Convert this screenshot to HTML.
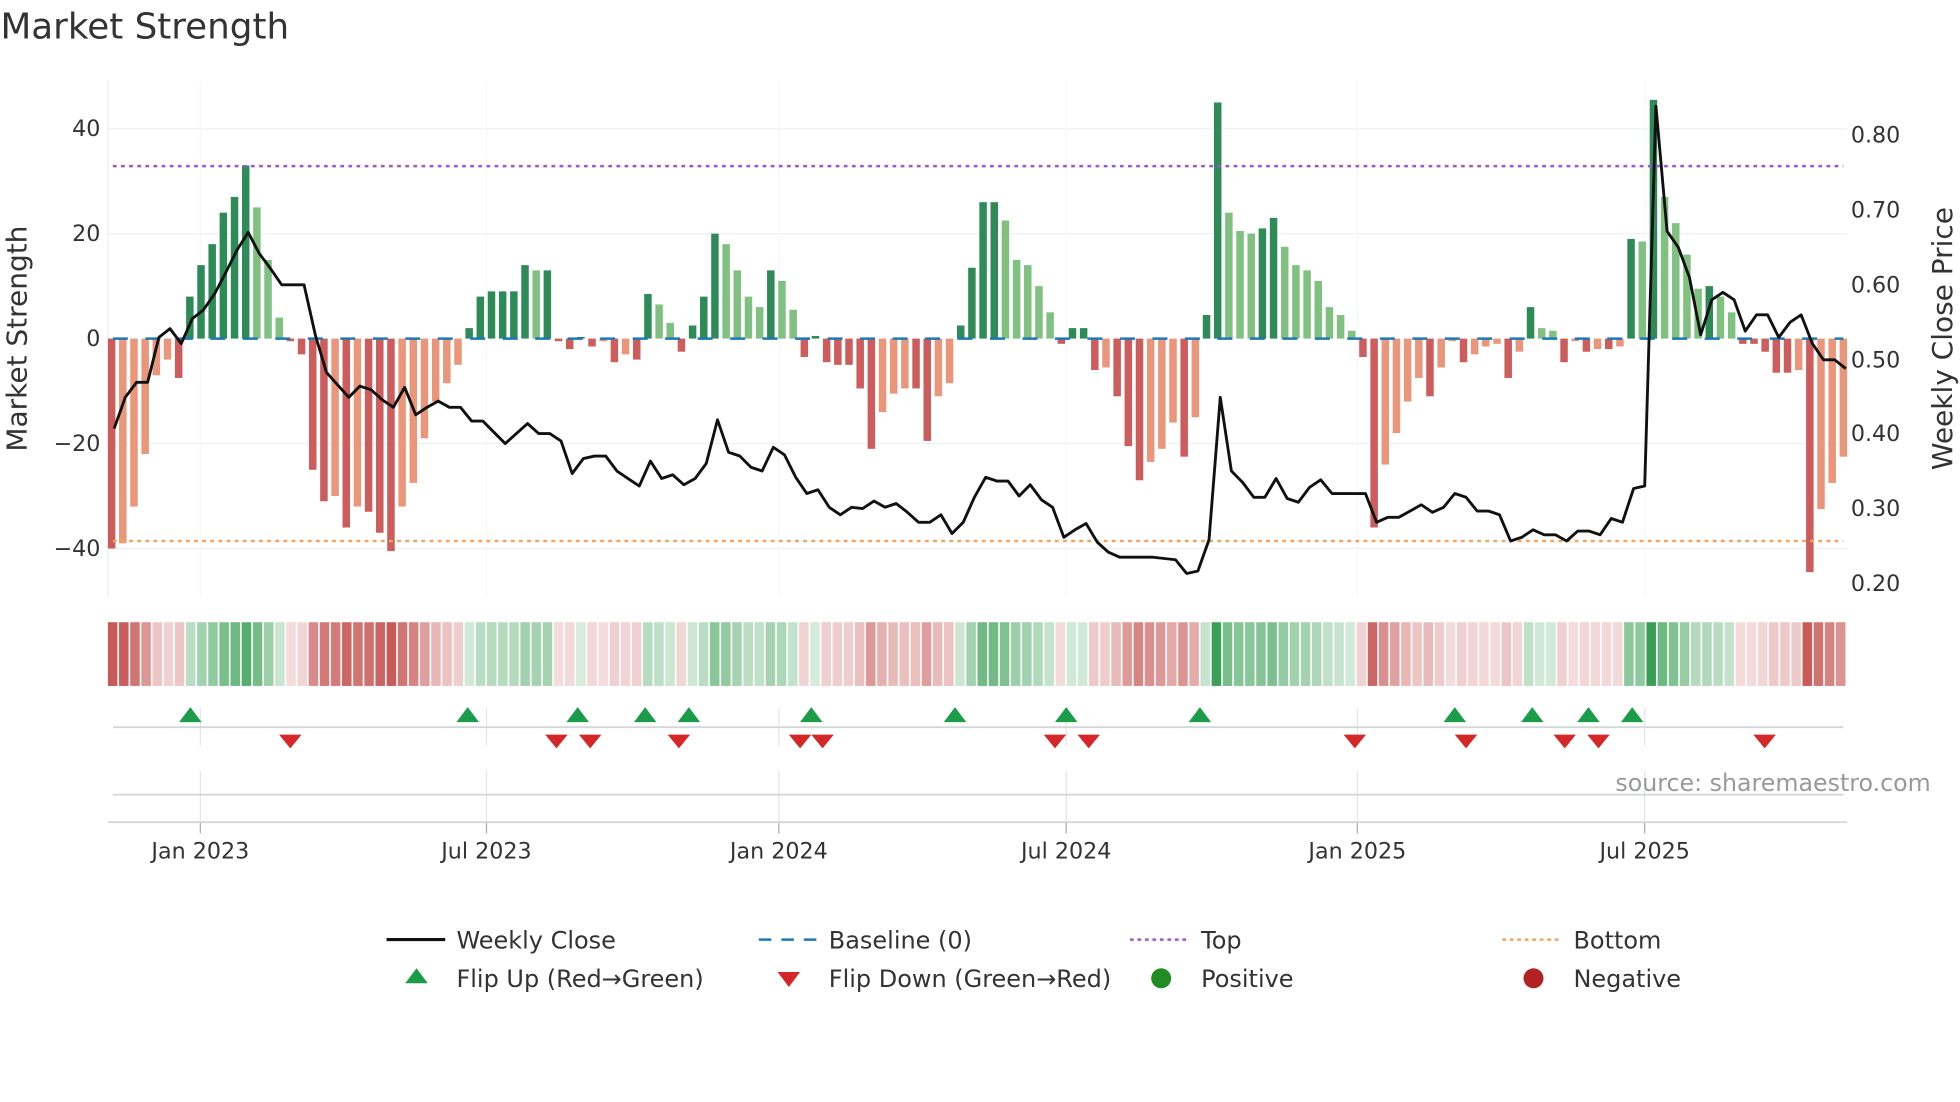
<!DOCTYPE html>
<html><head><meta charset="utf-8"><style>
html,body{margin:0;padding:0;background:#fff;}
svg{display:block;font-family:"DejaVu Sans","Liberation Sans",sans-serif;}
</style></head><body>
<svg id="c" width="1960" height="1102" viewBox="0 0 1568 882" xmlns="http://www.w3.org/2000/svg">
<rect width="1568" height="882" fill="#fff"/>
<text x="0" y="31" font-size="28.6" fill="#333">Market Strength</text>
<g id="grid"></g>
<g id="bars"></g>
<g id="heat"></g>
<g id="marks"></g>
<polyline id="line" fill="none" stroke="#111" stroke-width="2.3" stroke-linejoin="round"/>
<g font-size="17.8" fill="#333">
<text x="80" y="109" text-anchor="end">40</text>
<text x="80" y="193" text-anchor="end">20</text>
<text x="80" y="277" text-anchor="end">0</text>
<text x="80" y="361" text-anchor="end">−20</text>
<text x="80" y="445" text-anchor="end">−40</text>
<text x="1481" y="114">0.80</text>
<text x="1481" y="174">0.70</text>
<text x="1481" y="234">0.60</text>
<text x="1481" y="294">0.50</text>
<text x="1481" y="353">0.40</text>
<text x="1481" y="413">0.30</text>
<text x="1481" y="473">0.20</text>
<text x="160" y="687" text-anchor="middle">Jan 2023</text>
<text x="389" y="687" text-anchor="middle">Jul 2023</text>
<text x="623" y="687" text-anchor="middle">Jan 2024</text>
<text x="853" y="687" text-anchor="middle">Jul 2024</text>
<text x="1086" y="687" text-anchor="middle">Jan 2025</text>
<text x="1316" y="687" text-anchor="middle">Jul 2025</text>
</g>
<text transform="translate(21,271) rotate(-90)" font-size="22.4" fill="#333" text-anchor="middle">Market Strength</text>
<text transform="translate(1562,271) rotate(-90)" font-size="22.4" fill="#333" text-anchor="middle">Weekly Close Price</text>
<text x="1545" y="633" font-size="19" fill="#999" text-anchor="end">source: sharemaestro.com</text>
<g font-size="19.2" fill="#333">
<line x1="309" y1="752" x2="356" y2="752" stroke="#111" stroke-width="2.5"/>
<text x="365" y="759">Weekly Close</text>
<line x1="607" y1="752" x2="654" y2="752" stroke="#1f77b4" stroke-width="2" stroke-dasharray="10,8"/>
<text x="663" y="759">Baseline (0)</text>
<line x1="904" y1="752" x2="951" y2="752" stroke="#9b59d0" stroke-width="2" stroke-dasharray="3,3"/>
<text x="961" y="759">Top</text>
<line x1="1202" y1="752" x2="1249" y2="752" stroke="#f4a460" stroke-width="2" stroke-dasharray="3,3"/>
<text x="1259" y="759">Bottom</text>
<polygon points="324,787 342,787 333,775" fill="#1a9c48"/>
<text x="365" y="790">Flip Up (Red→Green)</text>
<polygon points="622,778 640,778 631,790" fill="#d62728"/>
<text x="663" y="790">Flip Down (Green→Red)</text>
<circle cx="929" cy="783" r="8" fill="#228b22"/>
<text x="961" y="790">Positive</text>
<circle cx="1227" cy="783" r="8" fill="#b22222"/>
<text x="1259" y="790">Negative</text>
</g>
</svg>
<script>
var NS="http://www.w3.org/2000/svg";
function el(p,t,a){var e=document.createElementNS(NS,t);for(var k in a)e.setAttribute(k,a[k]);p.appendChild(e);return e;}
var v=[-40,-39,-32,-22,-7,-4,-7.5,8,14,18,24,27,33,25,15,4,-0.5,-3,-25,-31,-30,-36,-32,-33,-37,-40.5,-32,-27.5,-19,-12,-8.5,-5,2,8,9,9,9,14,13,13,-0.5,-2,0.3,-1.5,-0.5,-4.5,-3,-4,8.5,6.5,3,-2.5,2.5,8,20,18,13,8,6,13,11,5.5,-3.5,0.5,-4.5,-5,-5,-9.5,-21,-14,-10.5,-9.5,-9.5,-19.5,-11,-8.5,2.5,13.5,26,26,22.5,15,14,10,5,-1,2,2,-6,-5.5,-11,-20.5,-27,-23.5,-21,-16,-22.5,-15,4.5,45,24,20.5,20,21,23,17.5,14,13,11,6,4.5,1.5,-3.5,-36,-24,-18,-12,-7.5,-11,-5.5,-0.5,-4.5,-3,-1.5,-1,-7.5,-2.5,6,2,1.5,-4.5,-0.5,-2.5,-2,-2,-1.5,19,18.5,45.5,27,22,16,9.5,10,8,5,-1,-1,-2.5,-6.5,-6.5,-6,-44.5,-32.5,-27.5,-22.5];
var py=[343,318,306,306,270,263,275,255,248,235,218,200,186,203,215,228,228,228,268,298,308,318,309,312,320,326,310,332,326,321,326,326,337,337,346,355,347,339,347,347,353,379,367,365,365,377,383,389,369,383,380,388,383,371,336,362,365,374,377,358,364,382,395,392,406,412,406,407,401,406,403,410,418,418,412,427,418,398,382,385,385,397,388,400,406,430,424,419,434,442,446,446,446,446,447,448,459,457,432,318,377,386,398,398,383,399,402,390,384,395,395,395,395,418,414,414,409,404,410,406,395,398,409,409,412,433,430,424,428,428,433,425,425,428,415,418,391,389,85,185,198,222,268,240,234,240,265,252,252,270,258,252,275,288,288,295];
var n=v.length,x0=89,dx=(1475-89)/(n-1),y0=271,k=4.2;
var dflag=[];for(var i=0;i<n;i++){var prev=i?v[i-1]:0;dflag.push((v[i]>0&&prev<=0)||(v[i]<0&&prev>=0)||Math.abs(v[i])>=Math.abs(prev));}
var g=document.getElementById("grid");
[103,187,355,439].forEach(function(y){el(g,"line",{x1:86,x2:1478,y1:y,y2:y,stroke:"#eef0f4","stroke-width":1});});
[160,389,623,853,1086,1316].forEach(function(x){el(g,"line",{x1:x,x2:x,y1:65,y2:478,stroke:"#f6f7f9","stroke-width":1});
el(g,"line",{x1:x,x2:x,y1:567,y2:597,stroke:"#e3e5ea","stroke-width":1});
el(g,"line",{x1:x,x2:x,y1:617,y2:658,stroke:"#e3e5ea","stroke-width":1});
el(g,"line",{x1:x,x2:x,y1:658,y2:667,stroke:"#aaa","stroke-width":1});});
el(g,"line",{x1:86,x2:86,y1:65,y2:478,stroke:"#eceef2","stroke-width":1});
el(g,"line",{x1:90,x2:1475,y1:582,y2:582,stroke:"#d3d6dc","stroke-width":1.5});
el(g,"line",{x1:90,x2:1475,y1:636,y2:636,stroke:"#d3d6dc","stroke-width":1.5});
el(g,"line",{x1:86,x2:1478,y1:658,y2:658,stroke:"#d3d6dc","stroke-width":1.5});
var b=document.getElementById("bars");
for(var i=0;i<n;i++){var x=x0+i*dx,h=v[i]*k,c;
 if(v[i]>=0)c=dflag[i]?"#2e8b57":"#80c080";else c=dflag[i]?"#cd5c5c":"#e9967a";
 el(b,"rect",{x:x-3,y:h>=0?y0-h:y0,width:6,height:Math.max(Math.abs(h),1),fill:c});}
el(b,"line",{x1:90,x2:1475,y1:271,y2:271,stroke:"#1f77b4","stroke-width":2,"stroke-dasharray":"12,14"});
el(b,"line",{x1:90,x2:1475,y1:133,y2:133,stroke:"#9b59d0","stroke-width":2,"stroke-dasharray":"3,3.5"});
el(b,"line",{x1:90,x2:1475,y1:433,y2:433,stroke:"#f4a460","stroke-width":2,"stroke-dasharray":"3,3.5"});
var hm=document.getElementById("heat");
var cw=(1478-86)/n;
for(var i=0;i<n;i++){var a=Math.min(0.2+Math.abs(v[i])/40*0.8,1);
 var col=v[i]>=0?"rgba(58,160,85,"+a+")":"rgba(200,90,88,"+a+")";
 el(hm,"rect",{x:86+i*cw,y:498,width:cw-1.3,height:51,fill:col});}
var m=document.getElementById("marks");
[152,374,462,516,551,649,764,853,960,1164,1226,1271,1306].forEach(function(x){el(m,"polygon",{points:(x-9)+",578 "+(x+9)+",578 "+x+",566",fill:"#1a9c48"});});
[232,445,472,543,640,658,844,871,1084,1173,1252,1279,1412].forEach(function(x){el(m,"polygon",{points:(x-9)+",588 "+(x+9)+",588 "+x+",599",fill:"#d62728"});});
var pts=[];for(var i=0;i<n;i++)pts.push((x0+2+i*dx).toFixed(1)+","+py[i]);
document.getElementById("line").setAttribute("points",pts.join(" "));
</script>
</body></html>
